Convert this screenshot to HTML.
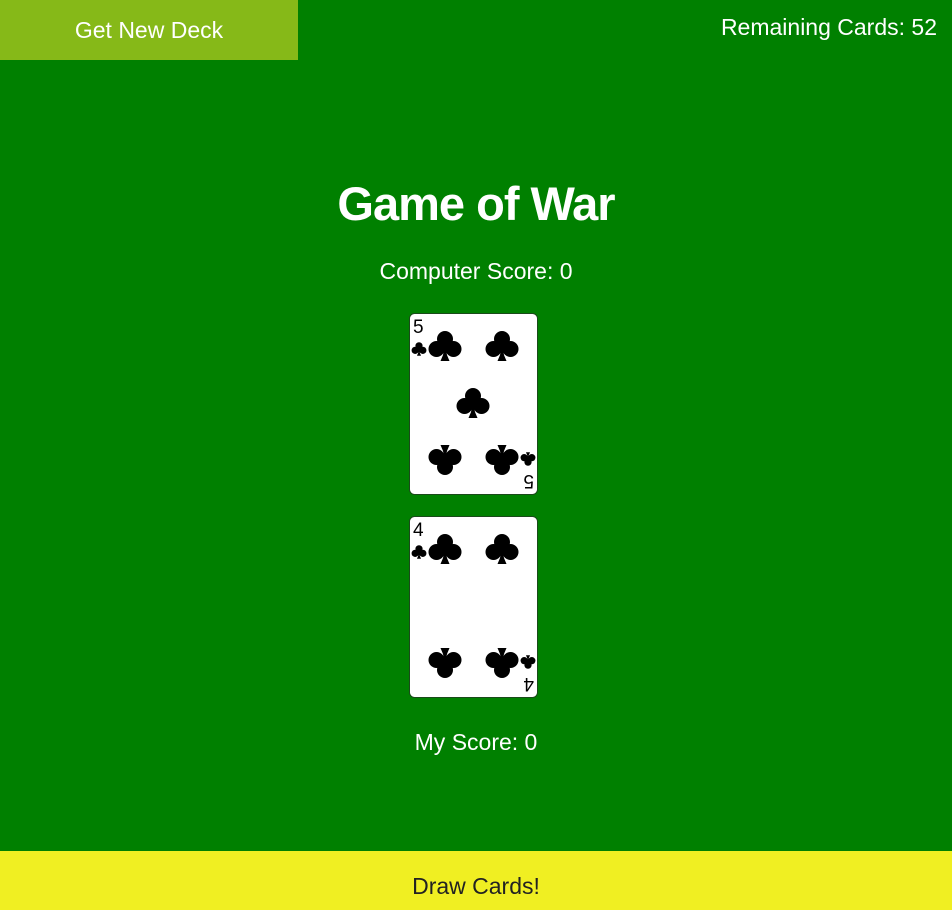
<!DOCTYPE html>
<html><head><style>
html,body{margin:0;padding:0;width:952px;height:910px;overflow:hidden;}
body{background:#008000;position:relative;font-family:"Liberation Sans",sans-serif;color:#fff;}
.btn{position:absolute;left:0;top:0;width:298px;height:60px;background:#86b918;font-size:23px;line-height:60px;text-align:center;}
.rem{position:absolute;right:15px;top:14px;font-size:23px;}
h1{position:absolute;left:0;right:0;top:176px;margin:0;text-align:center;font-size:47px;font-weight:bold;letter-spacing:-1px;}
.t{position:absolute;left:0;right:0;text-align:center;font-size:23px;}
.card{position:absolute;left:409px;width:129px;height:182px;}
.draw{position:absolute;left:0;top:851px;width:952px;height:59px;background:#f0ef22;color:#222;font-size:23px;line-height:70px;text-align:center;}
</style></head><body>
<div class="btn">Get New Deck</div>
<div class="rem">Remaining Cards: 52</div>
<h1>Game of War</h1>
<div class="t" style="top:258px">Computer Score: 0</div>
<svg width="0" height="0" style="position:absolute"><defs>
<g id="c"><circle cx="0" cy="-7" r="8"/><circle cx="-8.5" cy="3" r="8"/><circle cx="8.5" cy="3" r="8"/><path d="M0 -2 L-2 9 L-4.5 15 L4.5 15 L2 9 Z"/><rect x="-3" y="-3" width="6" height="8"/></g>
</defs></svg>
<svg class="card" style="top:313px" viewBox="0 0 129 182">
<rect x="0.5" y="0.5" width="128" height="181" rx="5" fill="#fff" stroke="#1a4a1a"/>
<text x="4" y="20" font-size="19" font-family="Liberation Sans" fill="#000">5</text>
<use href="#c" transform="translate(10,36) scale(0.45)"/>
<use href="#c" transform="translate(36,33)"/>
<use href="#c" transform="translate(93,33)"/>
<use href="#c" transform="translate(64,90)"/>
<use href="#c" transform="translate(36,147) rotate(180)"/>
<use href="#c" transform="translate(93,147) rotate(180)"/>
<use href="#c" transform="translate(119,146) rotate(180) scale(0.45)"/>
<text x="-125" y="-162" font-size="19" font-family="Liberation Sans" fill="#000" transform="rotate(180)">5</text>
</svg>
<svg class="card" style="top:516px" viewBox="0 0 129 182">
<rect x="0.5" y="0.5" width="128" height="181" rx="5" fill="#fff" stroke="#1a4a1a"/>
<text x="4" y="20" font-size="19" font-family="Liberation Sans" fill="#000">4</text>
<use href="#c" transform="translate(10,36) scale(0.45)"/>
<use href="#c" transform="translate(36,33)"/>
<use href="#c" transform="translate(93,33)"/>
<use href="#c" transform="translate(36,147) rotate(180)"/>
<use href="#c" transform="translate(93,147) rotate(180)"/>
<use href="#c" transform="translate(119,146) rotate(180) scale(0.45)"/>
<text x="-125" y="-162" font-size="19" font-family="Liberation Sans" fill="#000" transform="rotate(180)">4</text>
</svg>
<div class="t" style="top:729px">My Score: 0</div>
<div class="draw">Draw Cards!</div>
</body></html>
